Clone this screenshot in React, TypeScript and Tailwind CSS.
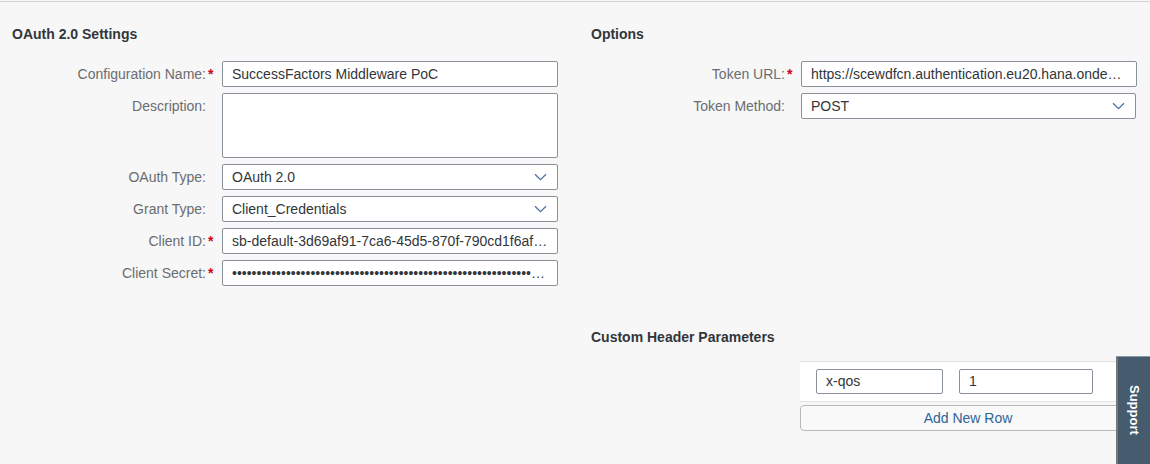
import React from "react";

type Row = {
  label: string;
  required?: boolean;
  value?: string;
  kind?: "text" | "area" | "select";
};

const leftRows: Row[] = [
  { label: "Configuration Name:", required: true, value: "SuccessFactors Middleware PoC" },
  { label: "Description:", kind: "area", value: "" },
  { label: "OAuth Type:", kind: "select", value: "OAuth 2.0" },
  { label: "Grant Type:", kind: "select", value: "Client_Credentials" },
  { label: "Client ID:", required: true, value: "sb-default-3d69af91-7ca6-45d5-870f-790cd1f6af0e-clone!b117912|it-rt-scewdfcn!b117912" },
  { label: "Client Secret:", required: true, value: "•".repeat(90) },
];

const rightRows: Row[] = [
  { label: "Token URL:", required: true, value: "https://scewdfcn.authentication.eu20.hana.ondemand.com/oauth/token" },
  { label: "Token Method:", kind: "select", value: "POST" },
];

function Chevron() {
  return (
    <svg width="13" height="8" viewBox="0 0 13 8" fill="none">
      <path d="M1 1.2l5.5 5.5L12 1.2" stroke="#4a74a3" strokeWidth="1.3" />
    </svg>
  );
}

function FormRow({ row }: { row: Row }) {
  const kind = row.kind ?? "text";
  return (
    <div className="flex items-start">
      <div className="w-[202px] shrink-0 h-[26px] flex items-center justify-end text-[14px] text-[#6a6d70]">
        <span>{row.label}</span>
        <span className="w-2 pl-[2px] text-[#d0021b] font-bold">{row.required ? "*" : ""}</span>
      </div>
      <div className="ml-2 w-[336px]">
        {kind === "area" ? (
          <div className="h-[65px] bg-white border border-[#89919a] rounded-[2px]" />
        ) : (
          <div className="h-[26px] bg-white border border-[#89919a] rounded-[2px] flex items-center pl-[9px] pr-[9px] text-[14px] text-[#32363a]">
            <span className="truncate flex-1 min-w-0">{row.value}</span>
            {kind === "select" && (
              <span className="ml-2 mr-[1px] flex items-center">
                <Chevron />
              </span>
            )}
          </div>
        )}
      </div>
    </div>
  );
}

function Heading({ children }: { children: React.ReactNode }) {
  return <h2 className="h-5 leading-5 text-[14px] font-bold text-[#32363a]">{children}</h2>;
}

export default function App() {
  return (
    <div className="relative min-h-screen overflow-hidden bg-[#f7f7f7] font-['Liberation_Sans',Arial,sans-serif]">
      <div className="mt-px h-px bg-[#d6d6d6]" />

      <div className="flex pl-3 pt-[22px]">
        <div className="w-[546px]">
          <Heading>OAuth 2.0 Settings</Heading>
          <div className="mt-[17px] flex flex-col gap-[6px]">
            {leftRows.map((r) => (
              <FormRow key={r.label} row={r} />
            ))}
          </div>
        </div>
        <div className="ml-[33px] w-[545px]">
          <Heading>Options</Heading>
          <div className="mt-[17px] flex flex-col gap-[6px]">
            {rightRows.map((r) => (
              <FormRow key={r.label} row={r} />
            ))}
          </div>
        </div>
      </div>

      <div className="flex pl-3 mt-[41px]">
        <div className="w-[546px]" />
        <div className="ml-[33px] w-[545px]">
          <Heading>Custom Header Parameters</Heading>
          <div className="mt-[14px] ml-[209px] w-[336px]">
            <div className="bg-white border-y border-[#e3e3e3] py-[7px] pl-4 flex gap-4">
              <div className="w-[127px] h-[25px] border border-[#89919a] rounded-[2px] bg-white flex items-center pl-[9px] text-[14px] text-[#32363a]">
                x-qos
              </div>
              <div className="w-[134px] h-[25px] border border-[#89919a] rounded-[2px] bg-white flex items-center pl-[9px] text-[14px] text-[#32363a]">
                1
              </div>
            </div>
            <button className="mt-[3px] w-full h-[26px] rounded-[4px] border border-[#b6babd] bg-[#f9f9f9] text-[14px] text-[#2f6497]">
              Add New Row
            </button>
          </div>
        </div>
      </div>

      <div className="absolute right-0 top-[356px] bottom-0 w-[34px] bg-[#465b6d] border-l-2 border-[#777] border-t border-t-[#8a99a6] flex justify-center pt-[28px]">
        <span className="[writing-mode:vertical-rl] text-white font-bold text-[13px] leading-none">
          Support
        </span>
      </div>
    </div>
  );
}
